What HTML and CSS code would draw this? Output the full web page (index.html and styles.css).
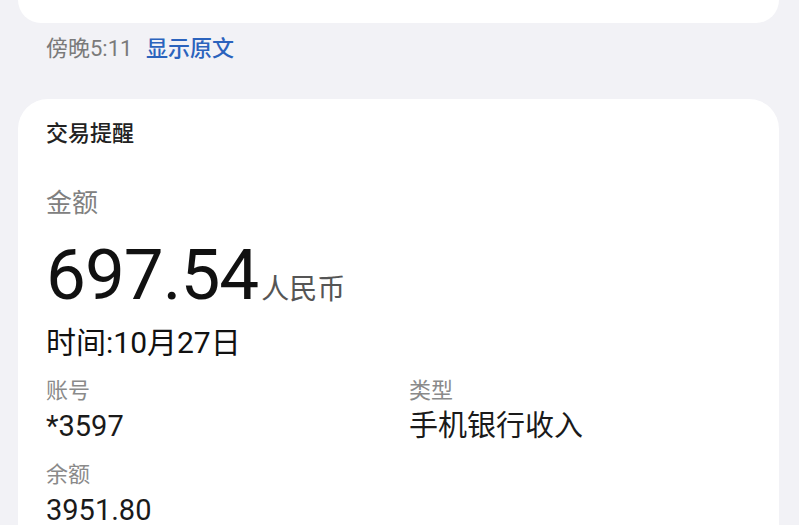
FILE: index.html
```html
<!DOCTYPE html>
<html lang="zh-CN">
<head>
    <meta charset="UTF-8">
    <meta name="viewport" content="width=device-width, initial-scale=1.0">
    <title>交易提醒</title>
    <link rel="stylesheet" href="styles.css">
</head>
<body>
    <div class="prev-card"></div>
    <div class="meta">
        <span class="time">傍晚5:11</span>
        <span class="link">显示原文</span>
    </div>
    <div class="card">
        <div class="card-title">交易提醒</div>
        <div class="amount-label">金额</div>
        <div class="amount">697.54<span class="currency">人民币</span></div>
        <div class="date">时间:10月27日</div>
        <div class="fields">
            <div class="field">
                <div class="field-label">账号</div>
                <div class="field-value">*3597</div>
            </div>
            <div class="field">
                <div class="field-label">类型</div>
                <div class="field-value">手机银行收入</div>
            </div>
            <div class="field">
                <div class="field-label">余额</div>
                <div class="field-value">3951.80</div>
            </div>
        </div>
    </div>
</body>
</html>
```

FILE: styles.css
```css
body {
    font-family: Roboto, "Noto Sans CJK SC", sans-serif;
    margin: 0;
    padding: 0;
    background-color: #f2f2f6;
    color: #1a1a1a;
    overflow: hidden;
    height: 525px;
}
.prev-card {
    height: 23px;
    margin: 0 20px 0 18px;
    background: #fff;
    border-radius: 0 0 30px 30px;
}
.meta {
    padding: 13px 0 0 46px;
    height: 76px;
    box-sizing: border-box;
    font-size: 22px;
    line-height: 26px;
}
.time {
    color: #7a7a7a;
    margin-right: 8px;
}
.link {
    color: #2b63bd;
    font-weight: 500;
}
.card {
    margin: 0 20px 0 18px;
    padding: 21px 28px 0;
    background: #fff;
    border-radius: 30px 30px 0 0;
    height: 460px;
}
.card-title {
    font-size: 22px;
    line-height: 28px;
    font-weight: 500;
    color: #222;
}
.amount-label {
    margin-top: 38px;
    font-size: 26px;
    line-height: 34px;
    color: #808080;
}
.amount {
    margin-top: 21px;
    font-size: 71px;
    line-height: 68px;
    font-weight: 400;
    letter-spacing: -1px;
    color: #111;
}
.currency {
    font-size: 28px;
    letter-spacing: 0;
    color: #555;
    margin-left: 3px;
}
.date {
    margin-top: 2px;
    font-size: 30px;
    line-height: 34px;
    color: #111;
}
.fields {
    display: grid;
    grid-template-columns: 363px 1fr;
    row-gap: 17px;
    margin-top: 17px;
}
.field-label {
    font-size: 22px;
    line-height: 28px;
    color: #8a8a8a;
}
.field-value {
    margin-top: 3px;
    font-size: 29px;
    line-height: 36px;
    color: #1a1a1a;
}
```
